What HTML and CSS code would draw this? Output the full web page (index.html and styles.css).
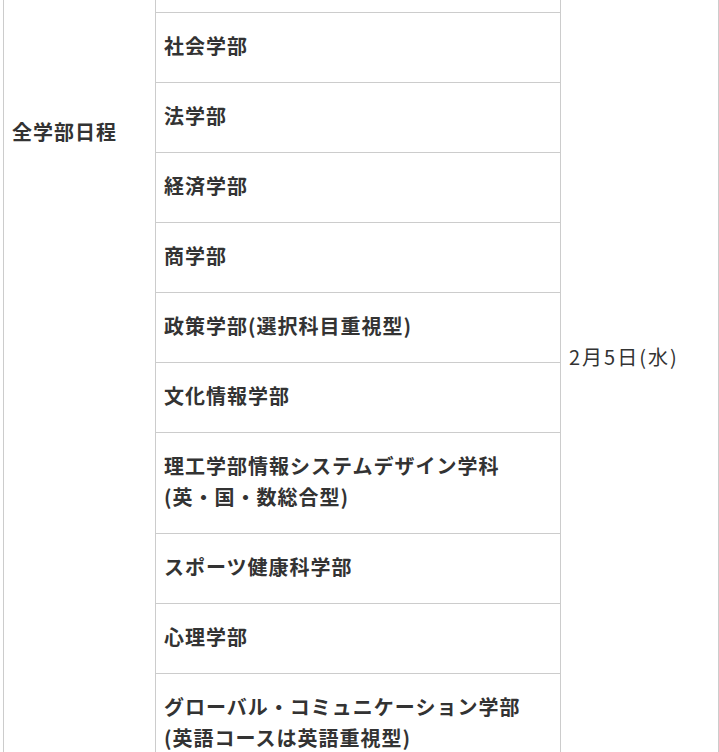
FILE: index.html
```html
<!DOCTYPE html>
<html lang="ja">
<head>
<meta charset="utf-8">
<title>入試日程</title>
<link rel="stylesheet" href="styles.css">
</head>
<body>
<div class="viewport">
<table class="schedule">
  <colgroup>
    <col class="c-cat">
    <col class="c-fac">
    <col class="c-date">
  </colgroup>
  <tbody>
    <tr>
      <th class="cat" rowspan="17">全学部日程</th>
      <td class="fac">文化情報学部</td>
      <td class="date" rowspan="6">2月4日(火)</td>
    </tr>
    <tr><td class="fac">理工学部</td></tr>
    <tr><td class="fac">生命医科学部</td></tr>
    <tr><td class="fac">スポーツ健康科学部</td></tr>
    <tr><td class="fac">心理学部</td></tr>
    <tr><td class="fac">理工学部情報システムデザイン学科<br>(理系型)</td></tr>
    <tr>
      <td class="fac">文学部</td>
      <td class="date" rowspan="11">2月5日(水)</td>
    </tr>
    <tr><td class="fac">社会学部</td></tr>
    <tr><td class="fac">法学部</td></tr>
    <tr><td class="fac">経済学部</td></tr>
    <tr><td class="fac">商学部</td></tr>
    <tr><td class="fac">政策学部(選択科目重視型)</td></tr>
    <tr><td class="fac">文化情報学部</td></tr>
    <tr><td class="fac">理工学部情報システムデザイン学科<br>(英・国・数総合型)</td></tr>
    <tr><td class="fac">スポーツ健康科学部</td></tr>
    <tr><td class="fac">心理学部</td></tr>
    <tr><td class="fac">グローバル・コミュニケーション学部<br>(英語コースは英語重視型)</td></tr>
  </tbody>
</table>
</div>
</body>
</html>
```

FILE: styles.css
```css
html, body {
  margin: 0;
  padding: 0;
  background: #ffffff;
}

.viewport {
  height: 752px;
  overflow: hidden;
}

.schedule {
  margin: -509px 0 0 3px;
  width: 715px;
  border-collapse: collapse;
  table-layout: fixed;
  font-family: "Noto Sans CJK JP", "Noto Sans", sans-serif;
  font-size: 20px;
  line-height: 31px;
  color: #333333;
  letter-spacing: 0.05em;
}

.c-cat { width: 152px; }
.c-fac { width: 405px; }
.c-date { width: 158px; }

.schedule th,
.schedule td {
  border: 1px solid #cccccc;
  padding: 17px 8px 21px;
  text-align: left;
  vertical-align: middle;
}

.cat {
  font-weight: 700;
  padding-bottom: 44px;
}

.fac {
  font-weight: 700;
}

.date {
  font-weight: 400;
  letter-spacing: 0.1em;
}
```
